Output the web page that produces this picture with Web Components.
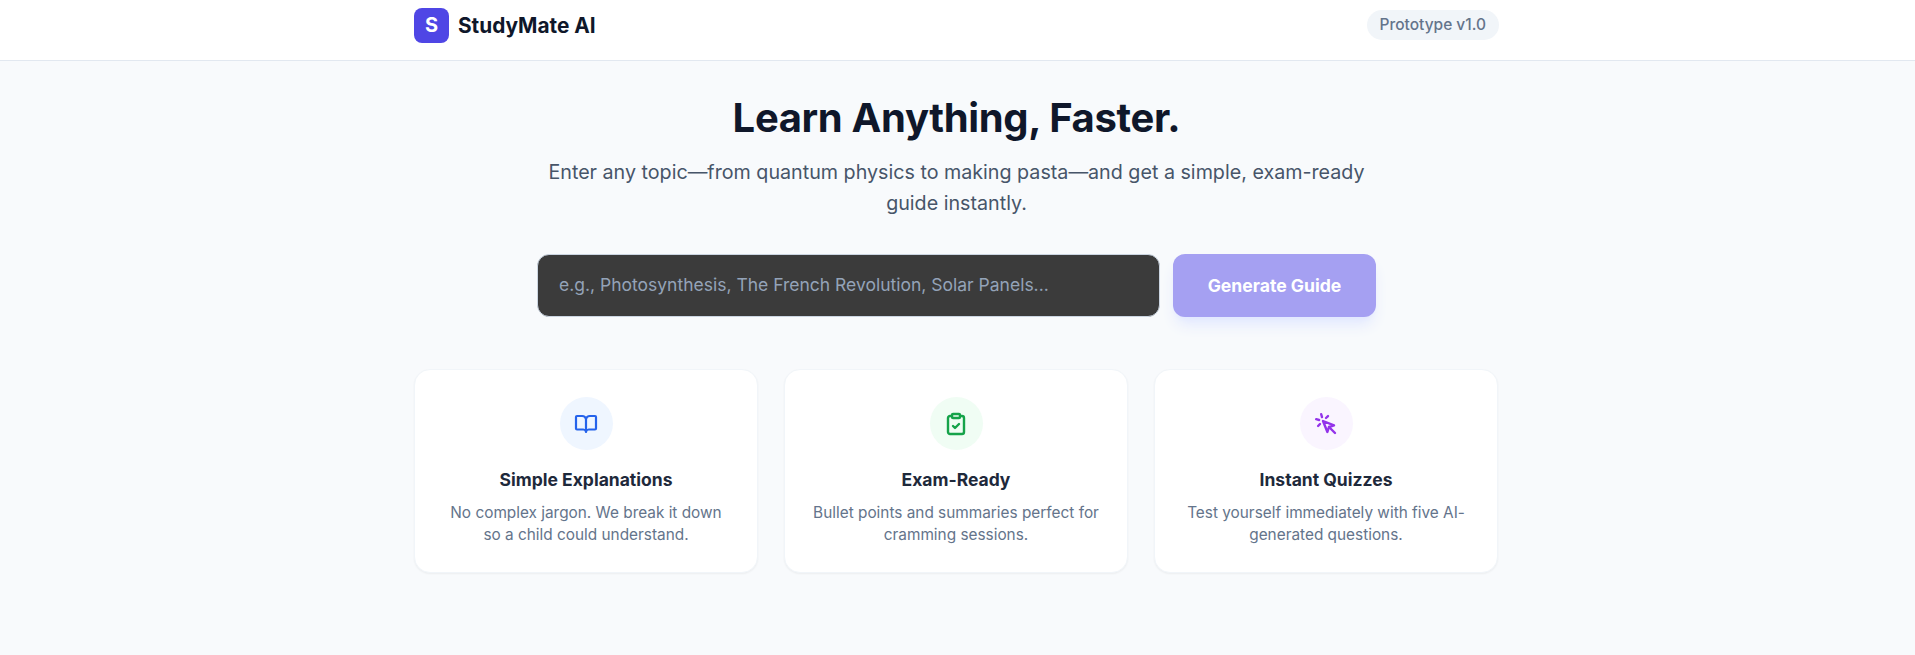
<!DOCTYPE html>
<html lang="en">
<head>
<meta charset="utf-8">
<title>StudyMate AI</title>
<style>
    html, body { margin: 0; height: 100%; }
    body { background: #f8fafc; font-family: Inter, "Liberation Sans", sans-serif; overflow: hidden; }
</style>
</head>
<body>
<app-header></app-header>
<app-main>
    <hero-block></hero-block>
    <topic-form></topic-form>
    <feature-grid>
        <feature-card heading="Simple Explanations" tint="#eff6ff">
            <svg slot="icon" width="24" height="24" viewBox="0 0 24 24" fill="none" stroke="#2563eb" stroke-width="2.2" stroke-linecap="round" stroke-linejoin="round"><path d="M12 7v13"/><path d="M3 17.5a1 1 0 0 1-1-1V5a1 1 0 0 1 1-1h5a4 4 0 0 1 4 3 4 4 0 0 1 4-3h5a1 1 0 0 1 1 1v11.5a1 1 0 0 1-1 1h-6a3 3 0 0 0-3 2 3 3 0 0 0-3-2z"/></svg>
            No complex jargon. We break it down so a child could understand.
        </feature-card>
        <feature-card heading="Exam-Ready" tint="#f0fdf4">
            <svg slot="icon" width="24" height="24" viewBox="0 0 24 24" fill="none" stroke="#16a34a" stroke-width="2.4" stroke-linecap="round" stroke-linejoin="round"><rect width="8" height="4" x="8" y="2" rx="1" ry="1"/><path d="M16 4h2a2 2 0 0 1 2 2v14a2 2 0 0 1-2 2H6a2 2 0 0 1-2-2V6a2 2 0 0 1 2-2h2"/><path d="m9 14 2 2 4-4"/></svg>
            Bullet points and summaries perfect for cramming sessions.
        </feature-card>
        <feature-card heading="Instant Quizzes" tint="#faf5ff">
            <svg slot="icon" width="24" height="24" viewBox="0 0 24 24" fill="none" stroke="#9333ea" stroke-width="2.4" stroke-linecap="round" stroke-linejoin="round"><path d="M14 4.1 12 6"/><path d="m5.1 8-2.9-.8"/><path d="m6 12-1.9 2"/><path d="M7.2 2.2 8 5.1"/><path d="m9 9 4.4 11 1.6-5 5-1.6z"/><path d="m15 15 6 6"/></svg>
            Test yourself immediately with five AI-generated questions.
        </feature-card>
    </feature-grid>
</app-main>

<script>
class AppHeader extends HTMLElement {
    constructor() {
        super();
        this.attachShadow({ mode: 'open' });
        this.shadowRoot.innerHTML = `
        <style>
            :host {
                display: block;
                background: #fff;
                border-bottom: 1px solid #e2e8f0;
            }
            .bar {
                box-sizing: border-box;
                width: 1087px;
                height: 60px;
                margin: 0 auto;
                padding: 0 2px 10px 0;
                display: flex;
                justify-content: space-between;
                align-items: center;
            }
            .brand { display: flex; align-items: center; gap: 9px; }
            .logo {
                width: 35px;
                height: 35px;
                border-radius: 8px;
                background: #4f46e5;
                color: #fff;
                font-weight: 700;
                font-size: 20px;
                display: flex;
                align-items: center;
                justify-content: center;
            }
            .name { font-size: 20.8px; font-weight: 700; color: #0f172a; }
            .badge {
                font-size: 15.5px;
                font-weight: 500;
                color: #64748b;
                background: #f1f5f9;
                border-radius: 999px;
                padding: 6px 13px;
                line-height: 18px;
            }
        </style>
        <div class="bar">
            <div class="brand"><div class="logo">S</div><div class="name">StudyMate AI</div></div>
            <div class="badge">Prototype v1.0</div>
        </div>`;
    }
}

class AppMain extends HTMLElement {
    constructor() {
        super();
        this.attachShadow({ mode: 'open' });
        this.shadowRoot.innerHTML = `
        <style>
            :host {
                display: block;
                box-sizing: border-box;
                width: 1087px;
                margin: 0 auto;
                padding: 32px 2px 0 0;
            }
        </style>
        <slot></slot>`;
    }
}

class HeroBlock extends HTMLElement {
    constructor() {
        super();
        this.attachShadow({ mode: 'open' });
        this.shadowRoot.innerHTML = `
        <style>
            :host { display: block; text-align: center; }
            h1 {
                margin: 0 0 14px;
                font-size: 40px;
                line-height: 50px;
                font-weight: 700;
                letter-spacing: -0.35px;
                color: #0f172a;
            }
            p {
                margin: 0 auto;
                max-width: 840px;
                font-size: 19.7px;
                line-height: 31px;
                color: #475569;
            }
        </style>
        <h1>Learn Anything, Faster.</h1>
        <p>Enter any topic—from quantum physics to making pasta—and get a simple, exam-ready guide instantly.</p>`;
    }
}

class TopicForm extends HTMLElement {
    constructor() {
        super();
        this.attachShadow({ mode: 'open' });
        this.shadowRoot.innerHTML = `
        <style>
            :host {
                display: flex;
                justify-content: center;
                gap: 13px;
                margin-top: 35px;
            }
            input {
                width: 623px;
                height: 63px;
                box-sizing: border-box;
                padding: 0 21px 2px;
                border: 1px solid #cbd5e1;
                border-radius: 12px;
                background: #3b3b3b;
                color: #fff;
                font: 400 17.5px Inter, "Liberation Sans", sans-serif;
            }
            input::placeholder { color: #94a3b8; opacity: 1; }
            button {
                width: 203px;
                height: 63px;
                border: 0;
                border-radius: 12px;
                background: #a5a0f2;
                color: #fff;
                font: 700 17.6px Inter, "Liberation Sans", sans-serif;
                box-shadow: 0 10px 15px -3px #e0e7ff, 0 4px 6px -4px #e0e7ff;
            }
        </style>
        <input type="text" placeholder="e.g., Photosynthesis, The French Revolution, Solar Panels...">
        <button type="button">Generate Guide</button>`;
    }
}

class FeatureGrid extends HTMLElement {
    constructor() {
        super();
        this.attachShadow({ mode: 'open' });
        this.shadowRoot.innerHTML = `
        <style>
            :host {
                display: grid;
                grid-template-columns: repeat(3, 344px);
                gap: 26px;
                margin-top: 52px;
            }
        </style>
        <slot></slot>`;
    }
}

class FeatureCard extends HTMLElement {
    constructor() {
        super();
        this.attachShadow({ mode: 'open' });
        this.shadowRoot.innerHTML = `
        <style>
            :host {
                display: block;
                box-sizing: border-box;
                height: 204px;
                padding: 27px 27px 0;
                background: #fff;
                border: 1px solid #f1f5f9;
                border-radius: 16px;
                box-shadow: 0 1px 2px rgba(0,0,0,.05);
                text-align: center;
            }
            .icon {
                width: 53px;
                height: 53px;
                margin: 0 auto 17px;
                border-radius: 50%;
                display: flex;
                align-items: center;
                justify-content: center;
            }
            h3 {
                margin: 0 0 9px;
                font-size: 17.5px;
                line-height: 26px;
                font-weight: 700;
                color: #1e293b;
            }
            p {
                margin: 0;
                font-size: 15.36px;
                line-height: 21.5px;
                color: #64748b;
            }
        </style>
        <div class="icon"><slot name="icon"></slot></div>
        <h3></h3>
        <p><slot></slot></p>`;
    }

    connectedCallback() {
        this.shadowRoot.querySelector('h3').textContent = this.getAttribute('heading');
        this.shadowRoot.querySelector('.icon').style.background = this.getAttribute('tint');
    }
}

customElements.define('app-header', AppHeader);
customElements.define('app-main', AppMain);
customElements.define('hero-block', HeroBlock);
customElements.define('topic-form', TopicForm);
customElements.define('feature-grid', FeatureGrid);
customElements.define('feature-card', FeatureCard);
</script>
</body>
</html>
